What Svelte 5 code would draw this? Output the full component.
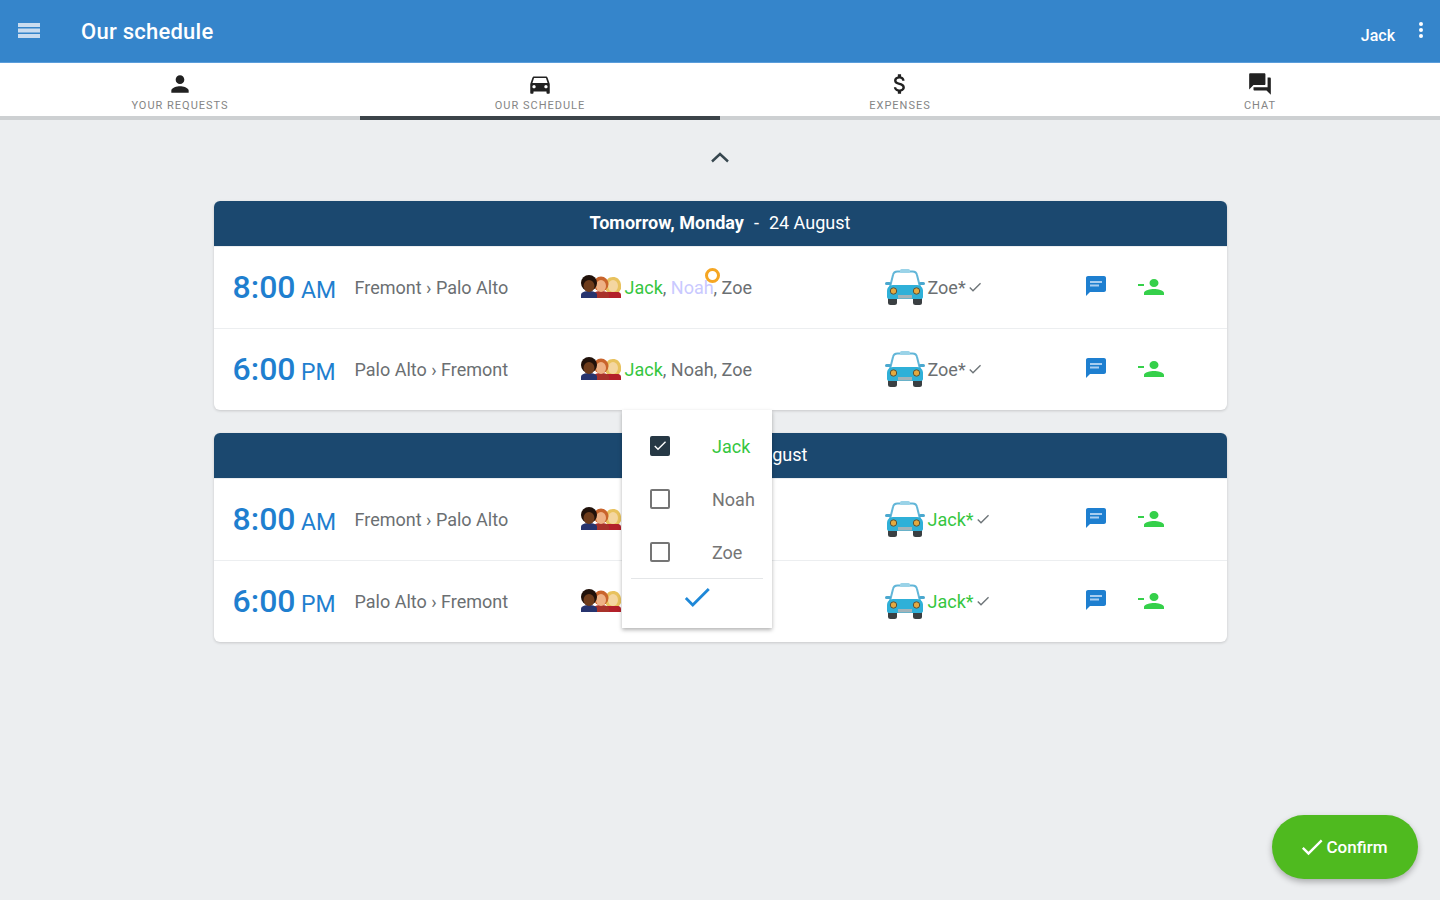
<script>
  const tabs = [
    { label: 'Your requests', icon: 'person' },
    { label: 'Our schedule', icon: 'car', active: true },
    { label: 'Expenses', icon: 'money' },
    { label: 'Chat', icon: 'forum' }
  ];

  const paths = {
    person: 'M12 12c2.21 0 4-1.79 4-4s-1.79-4-4-4-4 1.79-4 4 1.79 4 4 4zm0 2c-2.67 0-8 1.34-8 4v2h16v-2c0-2.66-5.33-4-8-4z',
    car: 'M18.92 6.01C18.72 5.42 18.16 5 17.5 5h-11c-.66 0-1.21.42-1.42 1.01L3 12v8c0 .55.45 1 1 1h1c.55 0 1-.45 1-1v-1h12v1c0 .55.45 1 1 1h1c.55 0 1-.45 1-1v-8l-2.08-5.99zM6.5 16c-.83 0-1.5-.67-1.5-1.5S5.67 13 6.5 13s1.5.67 1.5 1.5S7.33 16 6.5 16zm11 0c-.83 0-1.5-.67-1.5-1.5s.67-1.5 1.5-1.5 1.5.67 1.5 1.5-.67 1.5-1.5 1.5zM5 11l1.5-4.5h11L19 11H5z',
    money: 'M11.8 10.9c-2.27-.59-3-1.2-3-2.15 0-1.09 1.01-1.85 2.7-1.85 1.78 0 2.44.85 2.5 2.1h2.21c-.07-1.72-1.12-3.3-3.21-3.81V3h-3v2.16c-1.94.42-3.5 1.68-3.5 3.61 0 2.31 1.91 3.46 4.7 4.13 2.5.6 3 1.48 3 2.41 0 .69-.49 1.79-2.7 1.79-2.06 0-2.87-.92-2.98-2.1h-2.2c.12 2.19 1.76 3.42 3.68 3.83V21h3v-2.15c1.95-.37 3.5-1.5 3.5-3.55 0-2.84-2.43-3.81-4.7-4.4z',
    forum: 'M21 6h-2v9H6v2c0 .55.45 1 1 1h11l4 4V7c0-.55-.45-1-1-1zm-4 6V3c0-.55-.45-1-1-1H3c-.55 0-1 .45-1 1v14l4-4h10c.55 0 1-.45 1-1z'
  };

  const days = [
    {
      day: 'Tomorrow, Monday',
      date: '24 August',
      driver: 'Zoe',
      rides: [
        { time: '8:00', ampm: 'AM', route: 'Fremont › Palo Alto', noahPending: true },
        { time: '6:00', ampm: 'PM', route: 'Palo Alto › Fremont' }
      ]
    },
    {
      day: 'Tuesday',
      date: '25 August',
      driver: 'Jack',
      rides: [
        { time: '8:00', ampm: 'AM', route: 'Fremont › Palo Alto' },
        { time: '6:00', ampm: 'PM', route: 'Palo Alto › Fremont' }
      ]
    }
  ];

  const riders = [
    { name: 'Jack', checked: true },
    { name: 'Noah', checked: false },
    { name: 'Zoe', checked: false }
  ];
</script>

{#snippet faces()}
  <svg class="faces" width="40" height="24" viewBox="0 0 40 24" aria-hidden="true">
    <path d="M24 23v-3c0-3 4-4 8-4s8 1 8 4v3z" fill="#b3202a" />
    <path d="M24 14c-1-8 3-12 8-12s9 4 8 12l-2 3H26z" fill="#e8c25e" />
    <ellipse cx="32" cy="11" rx="5" ry="6" fill="#f4d6a0" />
    <path d="M12 23v-3c0-3 4-4 8-4s8 1 8 4v3z" fill="#a8322a" />
    <circle cx="20" cy="9" r="7.500" fill="#c9642c" />
    <ellipse cx="20" cy="11" rx="5" ry="6" fill="#eeb185" />
    <path d="M0 23v-3c0-3 4-4 8-4s8 1 8 4v3z" fill="#27346e" />
    <circle cx="8" cy="8" r="8" fill="#20110a" />
    <ellipse cx="8" cy="11" rx="5.500" ry="6" fill="#6e3c1c" />
  </svg>
{/snippet}

{#snippet taxi()}
  <svg class="taxi" width="40" height="36" viewBox="0 0 40 36" aria-hidden="true">
    <rect x="3" y="27" width="9" height="9" rx="2.500" fill="#3a3f42" />
    <rect x="28" y="27" width="9" height="9" rx="2.500" fill="#3a3f42" />
    <path d="M5 18 8 6c.4-2 2-3.500 4.500-3.500h15c2.500 0 4.100 1.500 4.500 3.500l3 12z" fill="#fff" stroke="#62b6d8" stroke-width="2" />
    <rect x="0" y="13" width="6" height="3" rx="1.500" fill="#4aa8cf" />
    <rect x="34" y="13" width="6" height="3" rx="1.500" fill="#4aa8cf" />
    <rect x="15" y="0" width="10" height="4" rx="1.500" fill="#9ad3e8" />
    <path d="M2 22c0-3 2-6 6-6h24c4 0 6 3 6 6v6c0 1-1 2-2 2H4c-1 0-2-1-2-2z" fill="#2fb0d8" />
    <circle cx="8.500" cy="22" r="3.200" fill="#e5a93f" stroke="#57513a" />
    <circle cx="31.500" cy="22" r="3.200" fill="#e5a93f" stroke="#57513a" />
    <rect x="13" y="26" width="14" height="3.500" fill="#a3b3b9" />
  </svg>
{/snippet}

{#snippet tick(size, color)}
  <svg width={size} height={size} viewBox="0 0 24 24" fill={color} aria-hidden="true">
    <path d="M9 16.170 4.830 12l-1.410 1.410L9 19 21 7l-1.410-1.410z" />
  </svg>
{/snippet}

<div class="page">
  <header class="topbar">
    <svg class="menu" width="24" height="24" viewBox="0 0 24 24" fill="#c9dcf0" aria-hidden="true">
      <path d="M1 4h22v4H1zM1 9.500h22v4H1zM1 15h22v4H1z" />
    </svg>
    <h1>Our schedule</h1>
    <span class="user">Jack</span>
    <svg class="more" width="6" height="18" viewBox="0 0 6 18" fill="#fff" aria-hidden="true">
      <circle cx="3" cy="3" r="2" /><circle cx="3" cy="9" r="2" /><circle cx="3" cy="15" r="2" />
    </svg>
  </header>

  <nav class="tabs">
    {#each tabs as tab}
      <div class="tab" class:active={tab.active}>
        <svg width="26" height="26" viewBox="0 0 24 24" fill="#212121" aria-hidden="true">
          <path d={paths[tab.icon]} />
        </svg>
        <span>{tab.label}</span>
      </div>
    {/each}
  </nav>

  <main>
    <svg class="collapse" width="24" height="24" viewBox="0 0 24 24" fill="none" stroke="#37474f" stroke-width="2.400" aria-hidden="true">
      <path d="M4 16.500 12 9l8 7.500" />
    </svg>

    {#each days as d}
      <section class="card">
        <div class="card-head"><strong>{d.day}</strong><span class="sep">-</span><span>{d.date}</span></div>
        {#each d.rides as r}
          <div class="ride">
            <div class="time"><b>{r.time}</b> <small>{r.ampm}</small></div>
            <div class="route">{r.route}</div>
            <div class="people">
              {@render faces()}
              <span class="names">
                <span class="green">Jack</span>,
                {#if r.noahPending}
                  <span class="pending">Noah<i class="ring"></i></span>,
                {:else}
                  Noah,
                {/if}
                Zoe
              </span>
            </div>
            <div class="driver" class:me={d.driver === 'Jack'}>
              {@render taxi()}
              <span>{d.driver}*</span>
              {@render tick(16, '#6d7478')}
            </div>
            <svg class="chat" width="24" height="24" viewBox="0 0 24 24" fill="#1e7fd0" aria-hidden="true">
              <path d="M20 2H4c-1.100 0-1.990.9-1.990 2L2 22l4-4h14c1.100 0 2-.9 2-2V4c0-1.100-.9-2-2-2z" />
              <path d="M6 7h12v2H6zm0 3.500h9v2H6z" fill="#a9cdf0" />
            </svg>
            <svg class="drop" width="28" height="24" viewBox="0 0 28 24" fill="#35d04a" aria-hidden="true">
              <path d="M17 12c2.760 0 4.500-1.800 4.500-4S19.760 4 17 4s-4.500 1.800-4.500 4 1.740 4 4.500 4zm0 2c-3.500 0-10 1.400-10 4v2h20v-2c0-2.600-6.500-4-10-4zM1 9h6v2H1z" />
            </svg>
          </div>
        {/each}
      </section>
    {/each}
  </main>

  <div class="popup">
    {#each riders as p}
      <div class="pick">
        <span class="box" class:on={p.checked}>
          {#if p.checked}{@render tick(19, '#fff')}{/if}
        </span>
        <span class="rider" class:green={p.checked}>{p.name}</span>
      </div>
    {/each}
    <div class="ok">{@render tick(34, '#1e88d8')}</div>
  </div>

  <button class="fab">
    {@render tick(28, '#fff')}
    <span>Confirm</span>
  </button>
</div>

<style>
  :global(body) {
    background: #eceef0;
    font-family: Roboto, "Liberation Sans", sans-serif;
  }

  .page {
    height: 900px;
    overflow: hidden;
  }

  .topbar {
    display: flex;
    align-items: center;
    height: 62px;
    padding: 0 17px;
    background: #3585cb;
    border-bottom: 1px solid #5a9ddb;
    color: #fff;
  }

  .menu {
    margin-right: 40px;
  }

  h1 {
    margin: 0;
    flex: 1;
    font-size: 22px;
    font-weight: 500;
    letter-spacing: 0.25px;
  }

  .user {
    margin-right: 23px;
    padding-top: 8px;
    font-size: 16px;
    font-weight: 500;
  }

  .more {
    margin-right: -1px;
    margin-top: -2px;
  }

  .tabs {
    display: grid;
    grid-template-columns: repeat(4, 1fr);
    background: #fff;
  }

  .tab {
    display: flex;
    flex-direction: column;
    align-items: center;
    height: 57px;
    padding-top: 8px;
    box-sizing: border-box;
    border-bottom: 4px solid #cdd0d2;
  }

  .tab.active {
    border-bottom-color: #3c4449;
  }

  .tab span {
    margin-top: 2px;
    font-size: 11px;
    line-height: 13px;
    letter-spacing: 1px;
    text-transform: uppercase;
    color: #858585;
  }

  main {
    display: flex;
    flex-direction: column;
    align-items: center;
    gap: 23px;
    padding-top: 25px;
  }

  .collapse {
    margin-bottom: 9px;
  }

  .card {
    width: 1013px;
    background: #fff;
    border-radius: 6px;
    box-shadow: 0 1px 3px rgba(0, 0, 0, 0.16);
    overflow: hidden;
  }

  .card-head {
    display: flex;
    justify-content: center;
    align-items: center;
    gap: 9px;
    height: 45px;
    padding-bottom: 2px;
    box-sizing: border-box;
    background: #1b486f;
    color: #fff;
    font-size: 18px;
  }

  .card-head strong {
    font-weight: 700;
  }

  .sep {
    padding: 0 1px;
  }

  .ride {
    display: grid;
    grid-template-columns: 141px 226px 304px 201px 51px 1fr;
    align-items: center;
    height: 82px;
    padding-bottom: 2px;
    box-sizing: border-box;
    border-top: 1px solid #eceef0;
    font-size: 18px;
    color: #6b6f72;
  }

  .time {
    padding-left: 19px;
    color: #1f7fcf;
    white-space: nowrap;
  }

  .time b {
    font-size: 32px;
    font-weight: 500;
  }

  .time small {
    font-size: 23px;
    margin-left: 1px;
  }

  .route {
    padding-top: 2px;
  }

  .people,
  .driver {
    display: flex;
    align-items: center;
  }

  .faces {
    margin-right: 4px;
  }

  .names {
    padding-top: 2px;
  }

  .pending {
    position: relative;
    color: #c9c9ff;
  }

  .ring {
    position: absolute;
    right: -6px;
    top: -9px;
    width: 9px;
    height: 9px;
    border: 3px solid #f5a623;
    border-radius: 50%;
  }

  .green,
  .driver.me span {
    color: #35c63f;
  }

  .driver {
    gap: 3px;
  }

  .driver span {
    margin-right: -2px;
    padding-top: 2px;
  }

  .chat {
    margin-left: -2px;
    margin-top: -2px;
  }

  .popup {
    position: absolute;
    left: 622px;
    top: 410px;
    width: 150px;
    height: 218px;
    padding-top: 9px;
    box-sizing: border-box;
    background: #fff;
    box-shadow: 0 2px 4px rgba(0, 0, 0, 0.3);
    font-size: 18px;
    color: #757575;
  }

  .pick {
    display: grid;
    grid-template-columns: 62px 1fr;
    align-items: center;
    height: 53px;
    padding-left: 28px;
  }

  .rider {
    padding-top: 2px;
  }

  .box {
    display: flex;
    align-items: center;
    justify-content: center;
    width: 20px;
    height: 20px;
    box-sizing: border-box;
    border: 2px solid #757575;
    border-radius: 2px;
  }

  .box.on {
    background: #263845;
    border-color: #263845;
  }

  .ok {
    display: flex;
    justify-content: center;
    margin: 0 9px;
    padding-top: 1px;
    border-top: 1px solid #e4e6e8;
  }

  .fab {
    position: absolute;
    left: 1272px;
    top: 815px;
    width: 146px;
    height: 64px;
    padding: 0 5px 0 0;
    display: flex;
    align-items: center;
    justify-content: center;
    gap: 1px;
    border: 0;
    border-radius: 32px;
    background: #4fba1f;
    color: #fff;
    font: 500 17px Roboto, sans-serif;
    box-shadow: 0 3px 6px rgba(0, 0, 0, 0.28);
  }
</style>
